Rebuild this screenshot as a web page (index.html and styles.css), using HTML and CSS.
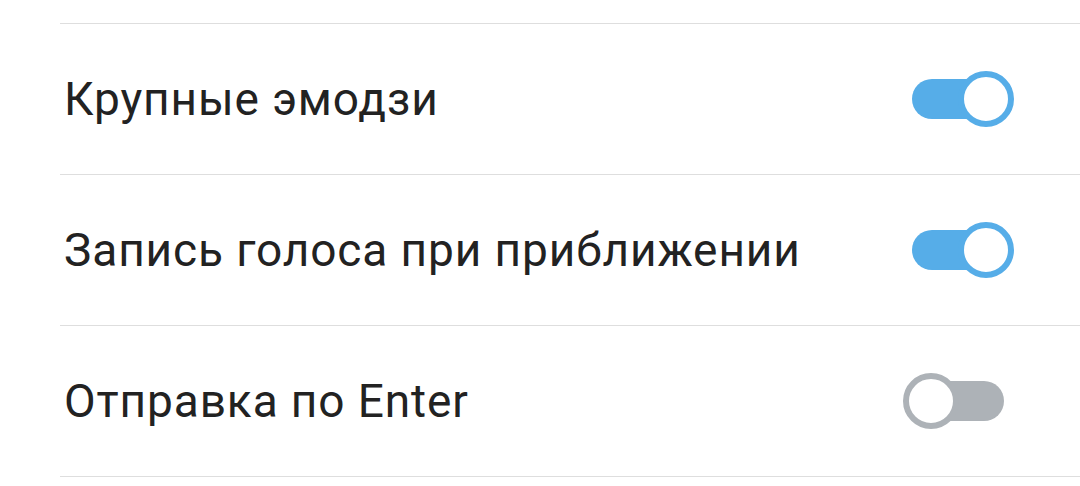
FILE: index.html
```html
<!DOCTYPE html>
<html lang="ru">
<head>
<meta charset="utf-8">
<link rel="stylesheet" href="styles.css">
</head>
<body>
<div class="list">
  <div class="row">
    <span class="label">Крупные эмодзи</span>
    <span class="switch on"><span class="track"></span><span class="knob"></span></span>
  </div>
  <div class="row">
    <span class="label">Запись голоса при приближении</span>
    <span class="switch on"><span class="track"></span><span class="knob"></span></span>
  </div>
  <div class="row">
    <span class="label">Отправка по Enter</span>
    <span class="switch off"><span class="track"></span><span class="knob"></span></span>
  </div>
  <div class="end"></div>
</div>
</body>
</html>
```

FILE: styles.css
```css
html, body {
  margin: 0;
  background: #ffffff;
}
body {
  width: 1080px;
  height: 486px;
  overflow: hidden;
  font-family: Roboto, "Noto Sans", sans-serif;
}
.list {
  padding-top: 23px;
  padding-left: 60px;
}
.row {
  height: 150px;
  border-top: 1px solid #dedede;
  display: flex;
  align-items: center;
  justify-content: space-between;
  padding-left: 4px;
  padding-right: 66px;
}
.end {
  border-top: 1px solid #dedede;
}
.label {
  font-size: 46px;
  letter-spacing: 0.9px;
  color: #222222;
}
.switch {
  position: relative;
  width: 111px;
  height: 58px;
  display: block;
}
.track {
  position: absolute;
  left: 9px;
  top: 9px;
  width: 92px;
  height: 40px;
  border-radius: 20px;
}
.knob {
  position: absolute;
  top: 1px;
  width: 44px;
  height: 44px;
  border-radius: 50%;
  background: #ffffff;
  border: 6px solid;
}
.on .track { background: #56ade8; }
.on .knob { right: 0; border-color: #56ade8; }
.off .track { background: #adb2b7; }
.off .knob { left: 0; border-color: #adb2b7; }
```
